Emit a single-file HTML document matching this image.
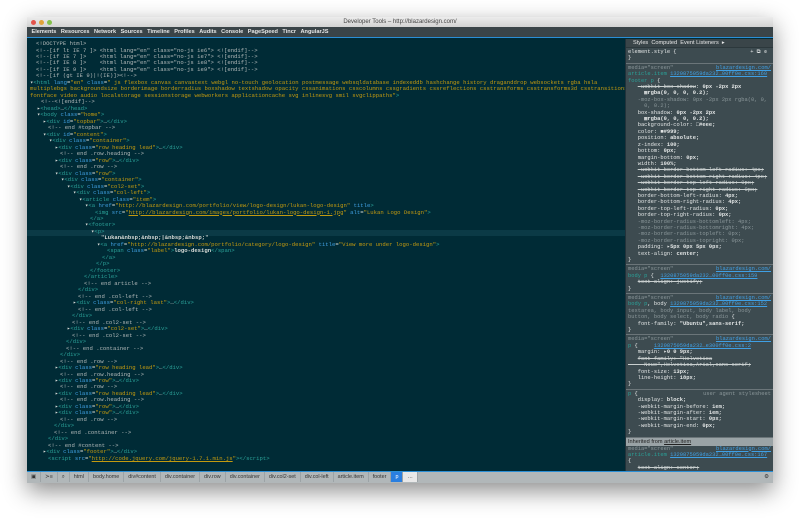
<!DOCTYPE html>
<html><head><style>
*{margin:0;padding:0;box-sizing:border-box}
body{width:799px;height:518px;background:#fff;position:relative;overflow:hidden;font-family:"Liberation Mono",monospace}
#win{position:absolute;left:27px;top:17px;width:746px;height:466px;background:#002b36;box-shadow:0 8px 22px rgba(0,0,0,.45);overflow:hidden}
#title{position:absolute;left:0;top:0;width:746px;height:10px;background:linear-gradient(#ececec,#d2d2d2);font:6px "Liberation Sans",sans-serif;color:#444;text-align:center;line-height:10px}
.dot{position:absolute;top:2.5px;width:5px;height:5px;border-radius:50%}
#tb{position:absolute;left:0;top:10px;width:746px;height:11px;background:#3a4448;border-bottom:1.5px solid #2a8fd6;font:bold 5.6px "Liberation Sans",sans-serif;color:#e8e8e8;line-height:10px;white-space:nowrap}
#tb span{margin-left:4.5px}
#code{position:absolute;left:0;top:24px;width:598px;height:430px;font-size:5.6px;line-height:6.48px;color:#d8dcd8;white-space:pre}
.l{position:absolute;left:0;height:6.48px;white-space:pre}
.t{color:#2aa198}.a{color:#3f9fe0}.v{color:#c29a10}.c{color:#b0b8b8}.y{color:#c29a10}.u{text-decoration:underline}
.hl{position:absolute;left:0;width:598px;height:6.5px;background:#0b3a46}
#rp{position:absolute;left:598px;top:22px;width:148px;height:432px;background:#3d4b50;border-left:1px solid #22323a;font-size:5.4px;line-height:6.4px;color:#e3e6e6;overflow:hidden}
#rp .sec{border-bottom:1.5px solid #6b7579;padding:1px 0 1px 2px;white-space:pre}
.g{color:#8a9699}.lk{color:#3fa0e5;text-decoration:underline;float:right;margin-right:2px}.s{text-decoration:line-through;color:#c9cfcf}.p{color:#2aa198}
#sb{position:absolute;left:0;top:454px;width:746px;height:12px;background:#b1b7b9;border-top:1.5px solid #2a8fd6;font:5.4px "Liberation Sans",sans-serif;color:#333;line-height:10px;white-space:nowrap}
#sb span{display:inline-block;padding:0 4px;border-right:1px solid #9ca3a6}
</style></head><body>
<div id="win">
<div id="title"><div class="dot" style="left:4px;background:#e2534b"></div><div class="dot" style="left:12px;background:#e0a33a"></div><div class="dot" style="left:20px;background:#84c14b"></div>Developer Tools – http://blazardesign.com/</div>
<div id="tb"><span>Elements</span><span>Resources</span><span>Network</span><span>Sources</span><span>Timeline</span><span>Profiles</span><span>Audits</span><span>Console</span><span>PageSpeed</span><span>Tincr</span><span>AngularJS</span></div>
<div id="code">
<div class="hl" style="top:188.5px"></div>
<div class="l" style="top:0;left:9px"><span class="c">&lt;!DOCTYPE html&gt;</span></div>
<div class="l" style="top:6.5px;left:9px"><span class="c">&lt;!--[if lt IE 7 ]&gt; &lt;html lang="en" class="no-js ie6"&gt; &lt;![endif]--&gt;</span></div>
<div class="l" style="top:13px;left:9px"><span class="c">&lt;!--[if IE 7 ]&gt;    &lt;html lang="en" class="no-js ie7"&gt; &lt;![endif]--&gt;</span></div>
<div class="l" style="top:19.4px;left:9px"><span class="c">&lt;!--[if IE 8 ]&gt;    &lt;html lang="en" class="no-js ie8"&gt; &lt;![endif]--&gt;</span></div>
<div class="l" style="top:25.9px;left:9px"><span class="c">&lt;!--[if IE 9 ]&gt;    &lt;html lang="en" class="no-js ie9"&gt; &lt;![endif]--&gt;</span></div>
<div class="l" style="top:32.4px;left:9px"><span class="c">&lt;!--[if (gt IE 9)|!(IE)]&gt;&lt;!--&gt;</span></div>
<div class="l" style="top:38.9px;left:3px">▾<span class="t">&lt;html</span> <span class="a">lang</span>=<span class="v">"en"</span> <span class="a">class</span>=<span class="v">" js flexbox canvas canvastext webgl no-touch geolocation postmessage websqldatabase indexeddb hashchange history draganddrop websockets rgba hsla</span></div>
<div class="l" style="top:45.4px;left:3px"><span class="y">multiplebgs backgroundsize borderimage borderradius boxshadow textshadow opacity cssanimations csscolumns cssgradients cssreflections csstransforms csstransforms3d csstransitions</span></div>
<div class="l" style="top:51.8px;left:3px"><span class="y">fontface video audio localstorage sessionstorage webworkers applicationcache svg inlinesvg smil svgclippaths"</span><span class="t">&gt;</span></div>
<div class="l" style="top:58.3px;left:14px"><span class="c">&lt;!--&lt;![endif]--&gt;</span></div>
<div class="l" style="top:64.8px;left:10px">▸<span class="t">&lt;head&gt;</span>…<span class="t">&lt;/head&gt;</span></div>
<div class="l" style="top:71.3px;left:10px">▾<span class="t">&lt;body</span> <span class="a">class</span>=<span class="v">"home"</span><span class="t">&gt;</span></div>
<div class="l" style="top:77.8px;left:16px">▸<span class="t">&lt;div</span> <span class="a">id</span>=<span class="v">"topbar"</span><span class="t">&gt;</span>…<span class="t">&lt;/div&gt;</span></div>
<div class="l" style="top:84.2px;left:21px"><span class="c">&lt;!-- end #topbar --&gt;</span></div>
<div class="l" style="top:90.7px;left:16px">▾<span class="t">&lt;div</span> <span class="a">id</span>=<span class="v">"content"</span><span class="t">&gt;</span></div>
<div class="l" style="top:97.2px;left:22px">▾<span class="t">&lt;div</span> <span class="a">class</span>=<span class="v">"container"</span><span class="t">&gt;</span></div>
<div class="l" style="top:103.7px;left:28px">▸<span class="t">&lt;div</span> <span class="a">class</span>=<span class="v">"row heading lead"</span><span class="t">&gt;</span>…<span class="t">&lt;/div&gt;</span></div>
<div class="l" style="top:110.2px;left:33px"><span class="c">&lt;!-- end .row.heading --&gt;</span></div>
<div class="l" style="top:116.6px;left:28px">▸<span class="t">&lt;div</span> <span class="a">class</span>=<span class="v">"row"</span><span class="t">&gt;</span>…<span class="t">&lt;/div&gt;</span></div>
<div class="l" style="top:123.1px;left:33px"><span class="c">&lt;!-- end .row --&gt;</span></div>
<div class="l" style="top:129.6px;left:28px">▾<span class="t">&lt;div</span> <span class="a">class</span>=<span class="v">"row"</span><span class="t">&gt;</span></div>
<div class="l" style="top:136.1px;left:34px">▾<span class="t">&lt;div</span> <span class="a">class</span>=<span class="v">"container"</span><span class="t">&gt;</span></div>
<div class="l" style="top:142.6px;left:40px">▾<span class="t">&lt;div</span> <span class="a">class</span>=<span class="v">"col2-set"</span><span class="t">&gt;</span></div>
<div class="l" style="top:149px;left:46px">▾<span class="t">&lt;div</span> <span class="a">class</span>=<span class="v">"col-left"</span><span class="t">&gt;</span></div>
<div class="l" style="top:155.5px;left:52px">▾<span class="t">&lt;article</span> <span class="a">class</span>=<span class="v">"item"</span><span class="t">&gt;</span></div>
<div class="l" style="top:162px;left:58px">▾<span class="t">&lt;a</span> <span class="a">href</span>=<span class="v">"http://blazardesign.com/portfolio/view/logo-design/lukan-logo-design"</span> <span class="a">title</span><span class="t">&gt;</span></div>
<div class="l" style="top:168.5px;left:68px"><span class="t">&lt;img</span> <span class="a">src</span>=<span class="v">"<span class="u">http://blazardesign.com/images/portfolio/lukan-logo-design-1.jpg</span>"</span> <span class="a">alt</span>=<span class="v">"Lukan Logo Design"</span><span class="t">&gt;</span></div>
<div class="l" style="top:175px;left:63px"><span class="t">&lt;/a&gt;</span></div>
<div class="l" style="top:181.4px;left:58px">▾<span class="t">&lt;footer&gt;</span></div>
<div class="l" style="top:187.9px;left:64px">▾<span class="t">&lt;p&gt;</span></div>
<div class="l" style="top:194.4px;left:74px">"<b>Lukan&amp;nbsp;&amp;nbsp;|&amp;nbsp;&amp;nbsp;</b>"</div>
<div class="l" style="top:200.9px;left:70px">▾<span class="t">&lt;a</span> <span class="a">href</span>=<span class="v">"http://blazardesign.com/portfolio/category/logo-design"</span> <span class="a">title</span>=<span class="v">"View more under logo-design"</span><span class="t">&gt;</span></div>
<div class="l" style="top:207.4px;left:80px"><span class="t">&lt;span</span> <span class="a">class</span>=<span class="v">"label"</span><span class="t">&gt;</span><b>logo-design</b><span class="t">&lt;/span&gt;</span></div>
<div class="l" style="top:213.8px;left:75px"><span class="t">&lt;/a&gt;</span></div>
<div class="l" style="top:220.3px;left:69px"><span class="t">&lt;/p&gt;</span></div>
<div class="l" style="top:226.8px;left:63px"><span class="t">&lt;/footer&gt;</span></div>
<div class="l" style="top:233.3px;left:57px"><span class="t">&lt;/article&gt;</span></div>
<div class="l" style="top:239.8px;left:57px"><span class="c">&lt;!-- end article --&gt;</span></div>
<div class="l" style="top:246.2px;left:51px"><span class="t">&lt;/div&gt;</span></div>
<div class="l" style="top:252.7px;left:51px"><span class="c">&lt;!-- end .col-left --&gt;</span></div>
<div class="l" style="top:259.2px;left:46px">▸<span class="t">&lt;div</span> <span class="a">class</span>=<span class="v">"col-right last"</span><span class="t">&gt;</span>…<span class="t">&lt;/div&gt;</span></div>
<div class="l" style="top:265.7px;left:51px"><span class="c">&lt;!-- end .col-left --&gt;</span></div>
<div class="l" style="top:272.2px;left:45px"><span class="t">&lt;/div&gt;</span></div>
<div class="l" style="top:278.6px;left:45px"><span class="c">&lt;!-- end .col2-set --&gt;</span></div>
<div class="l" style="top:285.1px;left:40px">▸<span class="t">&lt;div</span> <span class="a">class</span>=<span class="v">"col2-set"</span><span class="t">&gt;</span>…<span class="t">&lt;/div&gt;</span></div>
<div class="l" style="top:291.6px;left:45px"><span class="c">&lt;!-- end .col2-set --&gt;</span></div>
<div class="l" style="top:298.1px;left:39px"><span class="t">&lt;/div&gt;</span></div>
<div class="l" style="top:304.6px;left:39px"><span class="c">&lt;!-- end .container --&gt;</span></div>
<div class="l" style="top:311px;left:33px"><span class="t">&lt;/div&gt;</span></div>
<div class="l" style="top:317.5px;left:33px"><span class="c">&lt;!-- end .row --&gt;</span></div>
<div class="l" style="top:324px;left:28px">▸<span class="t">&lt;div</span> <span class="a">class</span>=<span class="v">"row heading lead"</span><span class="t">&gt;</span>…<span class="t">&lt;/div&gt;</span></div>
<div class="l" style="top:330.5px;left:33px"><span class="c">&lt;!-- end .row.heading --&gt;</span></div>
<div class="l" style="top:337px;left:28px">▸<span class="t">&lt;div</span> <span class="a">class</span>=<span class="v">"row"</span><span class="t">&gt;</span>…<span class="t">&lt;/div&gt;</span></div>
<div class="l" style="top:343.4px;left:33px"><span class="c">&lt;!-- end .row --&gt;</span></div>
<div class="l" style="top:349.9px;left:28px">▸<span class="t">&lt;div</span> <span class="a">class</span>=<span class="v">"row heading lead"</span><span class="t">&gt;</span>…<span class="t">&lt;/div&gt;</span></div>
<div class="l" style="top:356.4px;left:33px"><span class="c">&lt;!-- end .row.heading --&gt;</span></div>
<div class="l" style="top:362.9px;left:28px">▸<span class="t">&lt;div</span> <span class="a">class</span>=<span class="v">"row"</span><span class="t">&gt;</span>…<span class="t">&lt;/div&gt;</span></div>
<div class="l" style="top:369.4px;left:28px">▸<span class="t">&lt;div</span> <span class="a">class</span>=<span class="v">"row"</span><span class="t">&gt;</span>…<span class="t">&lt;/div&gt;</span></div>
<div class="l" style="top:375.8px;left:33px"><span class="c">&lt;!-- end .row --&gt;</span></div>
<div class="l" style="top:382.3px;left:27px"><span class="t">&lt;/div&gt;</span></div>
<div class="l" style="top:388.8px;left:27px"><span class="c">&lt;!-- end .container --&gt;</span></div>
<div class="l" style="top:395.3px;left:21px"><span class="t">&lt;/div&gt;</span></div>
<div class="l" style="top:401.8px;left:21px"><span class="c">&lt;!-- end #content --&gt;</span></div>
<div class="l" style="top:408.2px;left:16px">▸<span class="t">&lt;div</span> <span class="a">class</span>=<span class="v">"footer"</span><span class="t">&gt;</span>…<span class="t">&lt;/div&gt;</span></div>
<div class="l" style="top:414.7px;left:21px"><span class="t">&lt;script</span> <span class="a">src</span>=<span class="v">"<span class="u">http://code.jquery.com/jquery-1.7.1.min.js</span>"</span><span class="t">&gt;&lt;/script&gt;</span></div>
</div>
<div id="rp"><div style="background:#3a4549;border-bottom:1px solid #2c383c;height:9px;font:5.6px 'Liberation Sans',sans-serif;line-height:9px;padding-left:7px;color:#e8e8e8;white-space:pre">Styles  Computed  Event Listeners  ▸</div><div class="sec">element.style {<span style="float:right;margin-right:6px">+ ⧉ ✲</span>
}</div><div class="sec"><span class="g">media="screen"</span><span class="lk">blazardesign.com/</span>
<span class="p">article.item</span> <span class="lk" style="float:none">1320875059da232…00ff0e.css:160</span>
<span class="p">footer p</span> {
   <span class="s">-webkit-box-shadow</span>: <b>0px -2px 2px</b>
     ▩<b>rgba(0, 0, 0, 0.2);</b>
   <span class="g">-moz-box-shadow: 0px -2px 2px rgba(0, 0,
     0, 0.2);</span>
   box-shadow: <b>0px -2px 2px</b>
     ▩<b>rgba(0, 0, 0, 0.2);</b>
   background-color: <b>□#eee;</b>
   color: <b>■#999;</b>
   position: <b>absolute;</b>
   z-index: <b>100;</b>
   bottom: <b>0px;</b>
   margin-bottom: <b>0px;</b>
   width: <b>100%;</b>
   <span class="s">-webkit-border-bottom-left-radius: 4px;</span>
   <span class="s">-webkit-border-bottom-right-radius: 4px;</span>
   <span class="s">-webkit-border-top-left-radius: 0px;</span>
   <span class="s">-webkit-border-top-right-radius: 0px;</span>
   border-bottom-left-radius: <b>4px;</b>
   border-bottom-right-radius: <b>4px;</b>
   border-top-left-radius: <b>0px;</b>
   border-top-right-radius: <b>0px;</b>
   <span class="g">-moz-border-radius-bottomleft: 4px;
   -moz-border-radius-bottomright: 4px;
   -moz-border-radius-topleft: 0px;
   -moz-border-radius-topright: 0px;</span>
   padding: <b>▸5px 0px 5px 0px;</b>
   text-align: <b>center;</b>
}</div><div class="sec"><span class="g">media="screen"</span><span class="lk">blazardesign.com/</span>
<span class="p">body p</span> {  <span class="lk" style="float:none">1320875059da232…00ff0e.css:159</span>
   <span class="s">text-align: justify;</span>
}</div><div class="sec"><span class="g">media="screen"</span><span class="lk">blazardesign.com/</span>
<span class="p">body p</span>, body <span class="lk" style="float:none">1320875059da232…00ff0e.css:152</span>
<span class="g">textarea, body input, body label, body
button, body select, body radio</span> {
   font-family: <b>"Ubuntu",sans-serif;</b>
}</div><div class="sec"><span class="g">media="screen"</span><span class="lk">blazardesign.com/</span>
<span class="p">p</span> {     <span class="lk" style="float:none">1320875059da232…e300ff0e.css:2</span>
   margin: <b>▸0 0 9px;</b>
   <span class="s">font-family: "Helvetica
     Neue",Helvetica,Arial,sans-serif;</span>
   font-size: <b>13px;</b>
   line-height: <b>18px;</b>
}</div><div class="sec"><span class="p">p</span> {<span class="g" style="float:right;margin-right:2px">user agent stylesheet</span>
   display: <b>block;</b>
   -webkit-margin-before: <b>1em;</b>
   -webkit-margin-after: <b>1em;</b>
   -webkit-margin-start: <b>0px;</b>
   -webkit-margin-end: <b>0px;</b>
}</div><div style="background:#9aa3a6;color:#222;font:5.6px 'Liberation Sans',sans-serif;line-height:8px;padding-left:2px">Inherited from <u>article.item</u></div><div style="padding-left:2px;white-space:pre"><span class="g">media="screen"</span><span class="lk">blazardesign.com/</span>
<span class="p">article.item</span> <span class="lk" style="float:none">1320875059da232…00ff0e.css:167</span>
{
   <span class="s">text-align: center;</span></div></div>
<div id="sb"><span>▣</span><span>≻≡</span><span>⌕</span><span>html</span><span>body.home</span><span>div#content</span><span>div.container</span><span>div.row</span><span>div.container</span><span>div.col2-set</span><span>div.col-left</span><span>article.item</span><span>footer</span><span style="background:#2a7fe0;color:#fff">p</span><span style="background:#e8e8e8">…</span><span style="float:right;border:none">⚙</span></div>
</div>
</body></html>
